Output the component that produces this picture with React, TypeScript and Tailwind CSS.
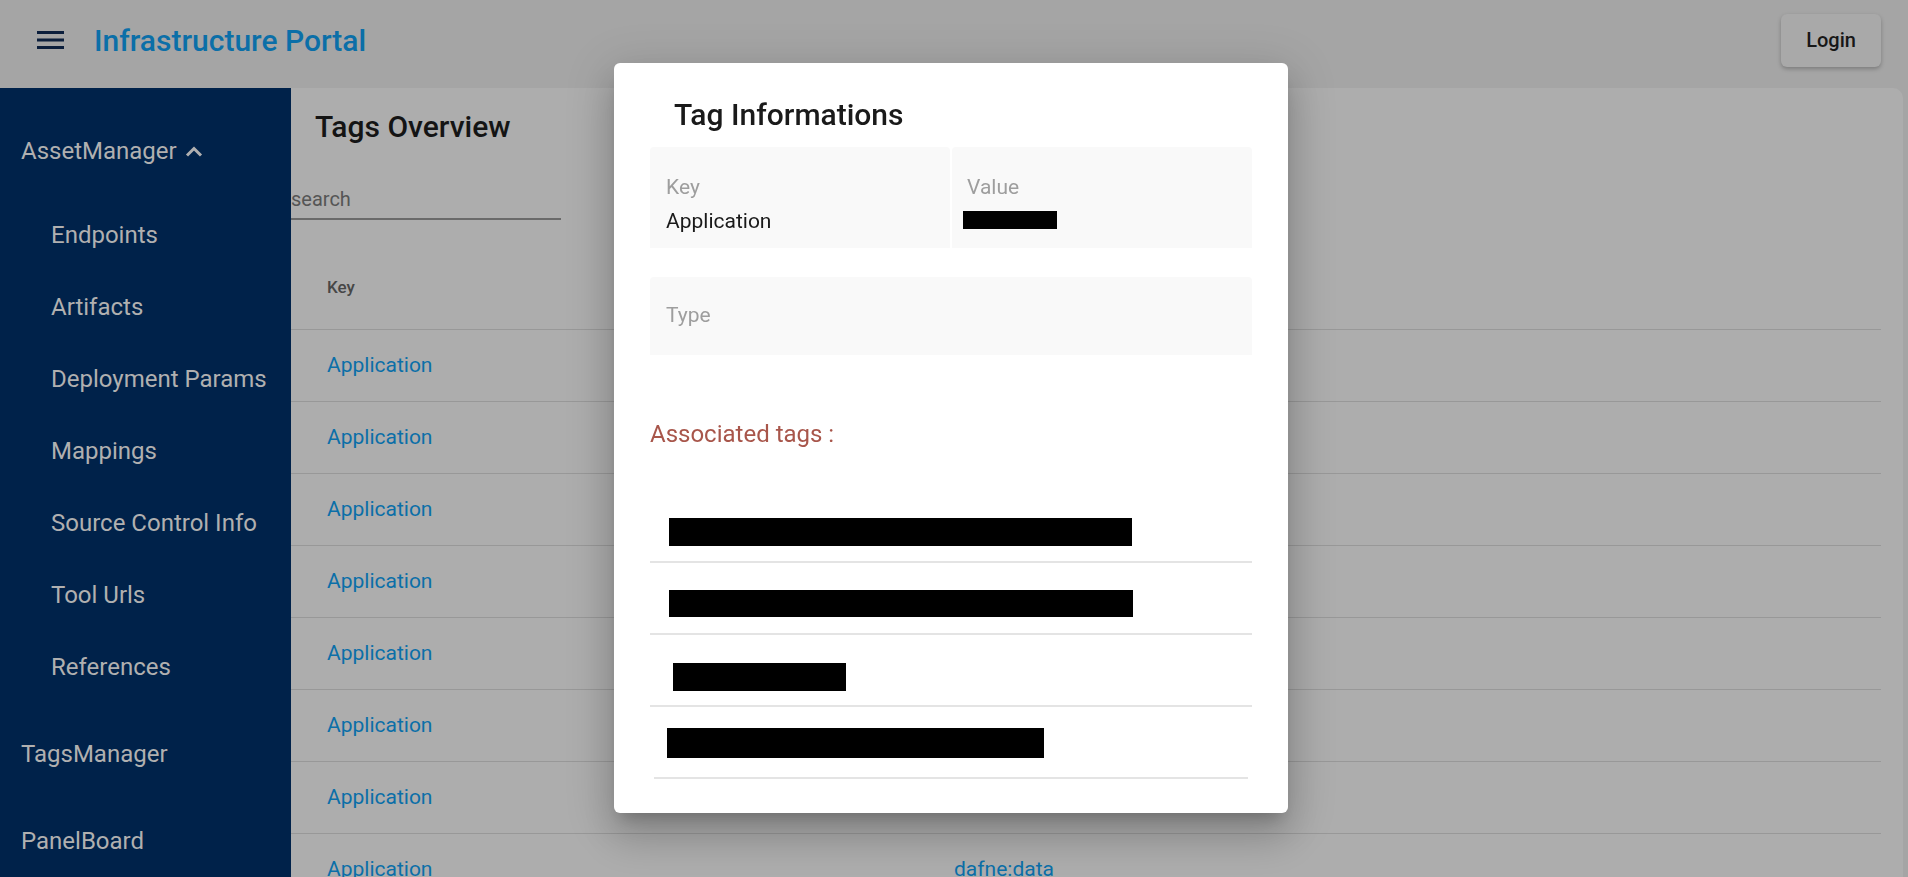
import { useState } from 'react'

interface NavGroup {
  label: string
  open?: boolean
  children?: string[]
}

const navGroups: NavGroup[] = [
  {
    label: 'AssetManager',
    open: true,
    children: ['Endpoints', 'Artifacts', 'Deployment Params', 'Mappings', 'Source Control Info', 'Tool Urls', 'References'],
  },
  { label: 'TagsManager' },
  { label: 'PanelBoard' },
]

const tagRows = [
  { key: 'Application', value: '' },
  { key: 'Application', value: '' },
  { key: 'Application', value: '' },
  { key: 'Application', value: '' },
  { key: 'Application', value: '' },
  { key: 'Application', value: '' },
  { key: 'Application', value: '' },
  { key: 'Application', value: 'dafne:data' },
]

// redacted associated tags (blacked out in the capture)
const redactions = [
  { row: 'pt-[27px]', box: 'ml-[19px] w-[463px] h-[28px]' },
  { row: 'pt-[27px]', box: 'ml-[19px] w-[464px] h-[27px]' },
  { row: 'pt-[28px]', box: 'ml-[23px] w-[173px] h-[28px]' },
  { row: 'pt-[21px] mx-[4px]', box: 'ml-[13px] w-[377px] h-[30px]' },
]

function MenuIcon() {
  return (
    <svg width="27" height="18" viewBox="0 0 27 18" fill="#0b1e3c">
      <rect x="0" y="0" width="27" height="3" />
      <rect x="0" y="7.5" width="27" height="3" />
      <rect x="0" y="15" width="27" height="3" />
    </svg>
  )
}

function Sidebar() {
  return (
    <aside className="w-[291px] shrink-0 bg-[#00224a] pt-[27px] text-[24px] text-[#b0b0b0]">
      {navGroups.map((g) => (
        <div key={g.label} className="mb-[15px]">
          <div className="flex h-[72px] items-center gap-[8px] pl-[21px]">
            <span>{g.label}</span>
            {g.open && (
              <svg width="18" height="11" viewBox="0 0 18 11" fill="none" stroke="#b0b0b0" strokeWidth="3">
                <path d="M2 9.5 L9 2.5 L16 9.5" />
              </svg>
            )}
          </div>
          {g.open && g.children && (
            <ul className="pt-[12px]">
              {g.children.map((c) => (
                <li key={c} className="flex h-[72px] items-center pl-[51px]">
                  {c}
                </li>
              ))}
            </ul>
          )}
        </div>
      ))}
    </aside>
  )
}

function TagsOverview() {
  const [query, setQuery] = useState('')
  return (
    <main className="mr-[5px] flex-1 rounded-tr-[10px] bg-[#adadad]">
      <h2 className="pl-[24px] pt-[21px] text-[30px] font-medium leading-[36px] text-[#141414]">Tags Overview</h2>
      <div className="mt-[37px] w-[270px] border-b-2 border-[#6a6a6a]">
        <input
          value={query}
          onChange={(e) => setQuery(e.target.value)}
          placeholder="search"
          className="h-[36px] w-full bg-transparent pb-[3px] text-[20px] text-[#555] outline-none placeholder:text-[#555]"
        />
      </div>
      <table className="mt-[39px] w-[1590px] border-collapse">
        <thead>
          <tr className="h-[70px] border-b border-[#989898] text-left">
            <th className="w-[663px] pb-[12px] pl-[36px] text-[17px] font-medium text-[#474747]">Key</th>
            <th className="pb-[12px] text-[17px] font-medium text-[#474747]" />
          </tr>
        </thead>
        <tbody>
          {tagRows.map((r, i) => (
            <tr key={i} className="h-[72px] border-b border-[#989898] text-[21px] text-[#0b6fa8]">
              <td className="pl-[36px] pt-[2px]">{r.key}</td>
              <td className="pt-[2px]">{r.value}</td>
            </tr>
          ))}
        </tbody>
      </table>
    </main>
  )
}

function TagDialog() {
  return (
    <div className="fixed inset-0 flex items-center justify-center pb-[2px] pr-[6px]">
      <div className="h-[750px] w-[674px] overflow-hidden rounded-[6px] bg-white px-[36px] pt-[34px] shadow-[0_11px_15px_-7px_rgba(0,0,0,0.2),0_24px_38px_3px_rgba(0,0,0,0.14),0_9px_46px_8px_rgba(0,0,0,0.12)]">
        <h3 className="pl-[24px] text-[30px] font-medium leading-[36px] text-[#1a1a1a]">Tag Informations</h3>
        <div className="mt-[14px] flex gap-[2px]">
          <div className="h-[101px] w-[300px] rounded-t-[4px] bg-[#f9f9f9] px-[16px] pt-[23px] text-[21px] leading-[34px]">
            <div className="text-[#9e9e9e]">Key</div>
            <div className="text-[#1a1a1a]">Application</div>
          </div>
          <div className="h-[101px] flex-1 rounded-t-[4px] bg-[#f9f9f9] px-[15px] pt-[23px] text-[21px] leading-[34px]">
            <div className="text-[#9e9e9e]">Value</div>
            <div className="ml-[-4px] mt-[7px] h-[18px] w-[94px] bg-black" />
          </div>
        </div>
        <div className="mt-[29px] flex h-[78px] items-center rounded-t-[4px] bg-[#f9f9f9] px-[16px] text-[21px] text-[#9e9e9e]">
          Type
        </div>
        <p className="mt-[65px] text-[24px] leading-[28px] text-[#a8564b]">Associated tags :</p>
        <ul className="mt-[43px]">
          {redactions.map((r, i) => (
            <li key={i} className={`h-[72px] border-b-2 border-[#e4e4e4] ${r.row}`}>
              <div className={`bg-black ${r.box}`} />
            </li>
          ))}
        </ul>
      </div>
    </div>
  )
}

export default function App() {
  return (
    <div className="relative h-[877px] overflow-hidden bg-[#a5a5a5] font-['Roboto',sans-serif]">
      <header className="flex h-[88px] items-center justify-between pb-[8px] pl-[37px] pr-[27px]">
        <div className="flex items-center gap-[30px]">
          <MenuIcon />
          <h1 className="text-[30px] font-medium text-[#0b6fa8]">Infrastructure Portal</h1>
        </div>
        <button
          type="button"
          className="h-[53px] w-[100px] rounded-[6px] bg-[#a9a9a9] text-[20px] font-medium text-[#171717] shadow-[0_2px_4px_rgba(0,0,0,0.25)]"
        >
          Login
        </button>
      </header>
      <div className="flex h-[789px]">
        <Sidebar />
        <TagsOverview />
      </div>
      <TagDialog />
    </div>
  )
}
